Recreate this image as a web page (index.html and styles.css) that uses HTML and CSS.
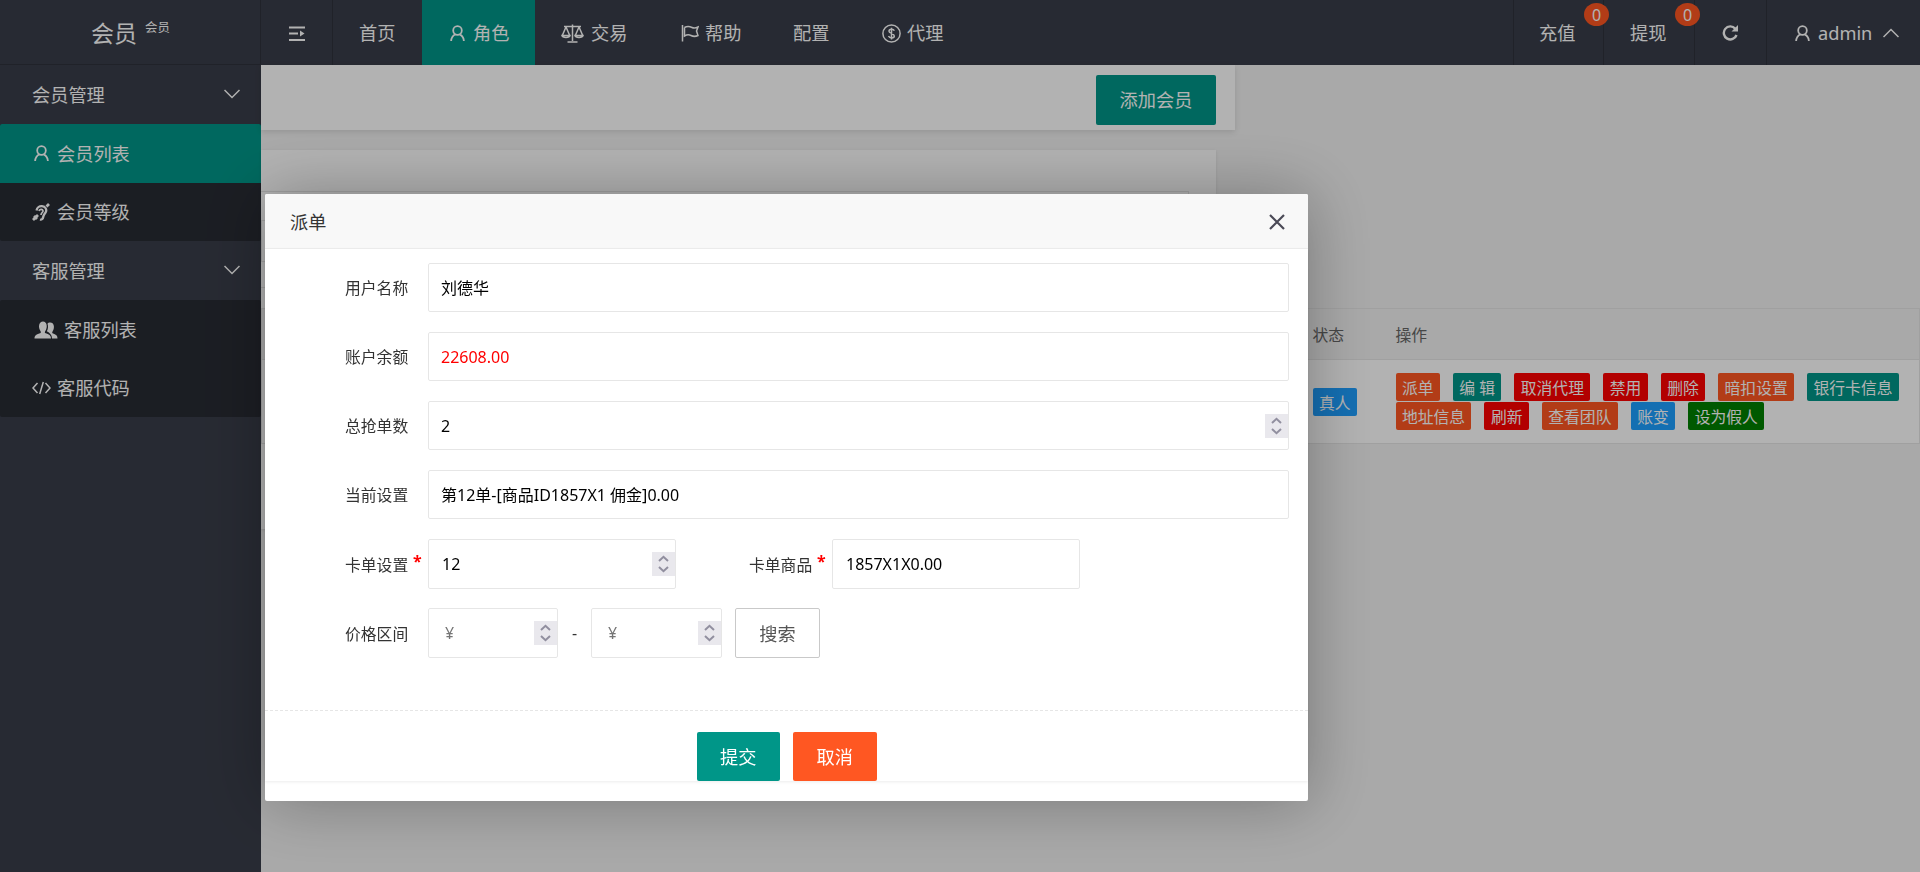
FILE: index.html
```
<!DOCTYPE html>
<html lang="zh-CN">
<head>
<meta charset="UTF-8">
<meta name="viewport" content="width=device-width, initial-scale=1.0">
<title>会员</title>
<link rel="stylesheet" href="styles.css">
</head>
<body>
<svg class="defs" width="0" height="0">
  <symbol id="user" viewBox="0 0 16 18">
    <circle cx="8" cy="5.8" r="4.6"/>
    <path d="M5.8 9.8C3 11.2 1.4 13.6 1.2 17M10.8 10.2C13.2 11.6 14.6 13.8 14.8 17"/>
  </symbol>
  <symbol id="down" viewBox="0 0 16 10"><path d="M.5 1L8 8.5L15.500 1"/></symbol>
  <symbol id="spin" viewBox="0 0 23 24">
    <path d="M7 9L11.500 4.800L16 9M7 15L11.500 19.200L16 15"/>
  </symbol>
</svg>

<div class="layout">
  <aside class="side">
    <div class="logo">会员<sup>会员</sup></div>
    <div class="menu-title">会员管理<svg class="icon arrow"><use href="#down"/></svg></div>
    <div class="submenu">
      <a class="item active"><svg class="icon user"><use href="#user"/></svg>会员列表</a>
      <a class="item">
        <svg class="icon ear" viewBox="0 0 18 18"><path d="M1 17L6 12M2 13L5 16M14.500 3.500L17 1" stroke-width="2.800"/><path d="M4.500 7.500C5 4.500 7.500 3 10 3.200C13.500 3.500 15 6.500 13.800 9C12.800 11 11.500 11.500 11.200 14C11 16 9.500 17 8 16.500" stroke-width="2.300"/><path d="M7 8C7.500 6 10.500 5.500 11 7.800C11.200 9.500 9 9.500 9 12" stroke-width="1.700"/></svg>会员等级
      </a>
    </div>
    <div class="menu-title">客服管理<svg class="icon arrow"><use href="#down"/></svg></div>
    <div class="submenu">
      <a class="item">
        <svg class="icon group" viewBox="0 0 24 18"><path class="solid" d="M14 17.500H23.500C23.500 14.500 22 13.500 18.500 12.300C18 11.500 18.200 11 18.800 10C21 6.500 20 1.500 16.300 1.500C14.800 1.500 13.900 2 13.500 2.800C14.500 5.500 14 8.500 12.800 10.300C15.800 12 18 14 18 17.500Z"/><path class="solid" d="M.5 17.500H17C17 14.500 15.200 13.300 11 12C10.700 11.300 11 10.500 11.500 9.800C13.800 6 13 .5 9 .5C4.800.5 4 6 6.300 9.800C6.800 10.500 7 11.300 6.700 12C2.500 13.200.5 14.500.5 17.500Z"/></svg>客服列表
      </a>
      <a class="item">
        <svg class="icon code" viewBox="0 0 19 14"><path d="M5.500 2L1 7L5.500 12M13.500 2L18 7L13.500 12M11.300 1L7.700 13"/></svg>客服代码
      </a>
    </div>
  </aside>

  <div class="main">
    <header class="header">
      <a class="nav-toggle">
        <svg class="icon toggle" viewBox="0 0 16 16"><path d="M0 1.500H16M0 7.500H9M0 14H16" stroke-width="2.200"/><path class="solid" d="M11 4.500L15.500 7.500L11 10.500Z"/></svg>
      </a>
      <a class="nav home">首页</a>
      <a class="nav role active"><svg class="icon user"><use href="#user"/></svg>角色</a>
      <a class="nav trade">
        <svg class="icon scale" viewBox="0 0 23 19"><path d="M3 2.500H20M11.500 .5V17M6.500 18H16.500M5 3L1.500 11M5 3L8.500 11M18 3L14.500 11M18 3L21.500 11M1 11.500H9C8.500 14 1.500 14 1 11.500ZM14 11.500H22C21.500 14 14.500 14 14 11.500Z"/></svg>交易
      </a>
      <a class="nav help">
        <svg class="icon flag" viewBox="0 0 18 18"><path d="M1.500 1V17.500M3.500 3.500C7 1.500 9 2.500 11 3.500C13 4.500 15 4 17 3L15.500 7L17 11.500C14 13 12 12.500 10 11.500C8 10.500 6 10.500 3.500 12V3.500"/></svg>帮助
      </a>
      <a class="nav config">配置</a>
      <a class="nav agent">
        <svg class="icon coin" viewBox="0 0 19 19"><circle cx="9.500" cy="9.500" r="8.600"/><path d="M12.300 6.800C11.500 4.800 7 4.800 7 7.200C7 9.800 12.300 9 12.300 12C12.300 14.500 7.500 14.500 6.500 12M9.500 3.800V15.500"/></svg>代理
      </a>
      <div class="tools">
        <a class="tool pay">充值<span class="badge">0</span></a>
        <a class="tool cash">提现<span class="badge">0</span></a>
        <a class="tool reload">
          <svg class="icon refresh" viewBox="0 0 16 16"><path d="M13.200 3.600A6.500 6.500 0 1 0 14.500 10" stroke-width="2.400"/><path class="solid" d="M16 0V6.500H9.500Z"/></svg>
        </a>
        <a class="tool admin"><svg class="icon user"><use href="#user"/></svg>admin<svg class="icon arrow up"><use href="#down"/></svg></a>
      </div>
    </header>

    <div class="toolbar"><button class="btn">添加会员</button></div>
    <div class="card">
      <div class="search-box"><div class="search-field"></div></div>
      <table class="table">
        <thead>
          <tr><th class="rest"></th><th class="state">状态</th><th>操作</th></tr>
        </thead>
        <tbody>
          <tr>
            <td class="rest"></td>
            <td class="state"><span class="tag blue">真人</span></td>
            <td>
              <div class="tags">
                <span class="tag orange">派单</span>
                <span class="tag teal">编 辑</span>
                <span class="tag red">取消代理</span>
                <span class="tag red">禁用</span>
                <span class="tag red">删除</span>
                <span class="tag orange">暗扣设置</span>
                <span class="tag teal">银行卡信息</span>
              </div>
              <div class="tags">
                <span class="tag orange">地址信息</span>
                <span class="tag red">刷新</span>
                <span class="tag orange">查看团队</span>
                <span class="tag blue">账变</span>
                <span class="tag green">设为假人</span>
              </div>
            </td>
          </tr>
        </tbody>
      </table>
    </div>
  </div>
</div>

<div class="shade"></div>

<div class="modal">
  <div class="modal-title">派单
    <svg class="close" viewBox="0 0 16 16"><path d="M1 1L15 15M15 1L1 15"/></svg>
  </div>
  <form class="form">
    <div class="row">
      <label>用户名称</label>
      <div class="field full">刘德华</div>
    </div>
    <div class="row">
      <label>账户余额</label>
      <div class="field full money">22608.00</div>
    </div>
    <div class="row">
      <label>总抢单数</label>
      <div class="field full">2<svg class="spin"><use href="#spin"/></svg></div>
    </div>
    <div class="row">
      <label>当前设置</label>
      <div class="field full">第12单-[商品ID1857X1 佣金]0.00</div>
    </div>
    <div class="row tall">
      <label class="required">卡单设置</label>
      <div class="field half">12<svg class="spin"><use href="#spin"/></svg></div>
      <label class="required second">卡单商品</label>
      <div class="field half">1857X1X0.00</div>
    </div>
    <div class="row tall">
      <label>价格区间</label>
      <div class="field price">¥<svg class="spin"><use href="#spin"/></svg></div>
      <span class="dash">-</span>
      <div class="field price last">¥<svg class="spin"><use href="#spin"/></svg></div>
      <button type="button" class="btn plain">搜索</button>
    </div>
    <div class="line"></div>
    <div class="actions">
      <button type="button" class="btn">提交</button>
      <button type="button" class="btn danger">取消</button>
    </div>
  </form>
</div>
</body>
</html>
```

FILE: styles.css
```
* {
  box-sizing: border-box;
}

body {
  margin: 0;
  height: 872px;
  overflow: hidden;
  background: #f2f2f2;
  color: #333;
  font-family: "Noto Sans", "Noto Sans CJK SC", sans-serif;
  font-size: 18.2px;
  line-height: 24px;
}

button {
  font-family: inherit;
}

.defs {
  position: absolute;
}

.icon {
  flex: none;
  fill: none;
  stroke: currentColor;
  stroke-width: 1.5;
}

.icon .solid {
  fill: currentColor;
  stroke: none;
}

.icon.user {
  width: 15px;
  height: 17px;
  stroke-width: 1.9;
}

.icon.arrow {
  width: 16px;
  height: 10px;
}

.layout {
  display: flex;
  height: 872px;
}

/* side menu */
.side {
  flex: none;
  width: 261px;
  background: #393d49;
  color: #fff;
}

.logo {
  height: 65px;
  padding: 15px 0 0 91px;
  border-right: 1px solid #2f323c;
  border-bottom: 1px solid #2f323c;
  font-size: 23px;
  line-height: 36px;
  display: flex;
}

.logo sup {
  margin: -5px 0 0 8px;
  font-size: 12.4px;
}

.menu-title {
  display: flex;
  align-items: center;
  justify-content: space-between;
  height: 59px;
  padding: 1px 21px 0 32px;
}

.menu-title .arrow {
  margin-top: -3px;
}

.submenu {
  height: 117px;
  border-radius: 2px;
  background: #282b33;
  overflow: hidden;
}

.item {
  display: flex;
  align-items: center;
  height: 58.5px;
  padding: 1px 0 0 32px;
}

.item .user {
  margin: 0 8px 0 2px;
}

.item.active,
.nav.active {
  background: #009688;
}

.ear {
  width: 18px;
  height: 18px;
  margin-right: 7px;
}

.group {
  width: 24px;
  height: 18px;
  margin: 0 6px 0 2px;
}

.code {
  width: 19px;
  height: 14px;
  margin-right: 6px;
}

/* top bar */
.main {
  width: 1659px;
}

.header {
  display: flex;
  height: 65px;
  background: #393d49;
  color: #fff;
}

.nav-toggle {
  display: flex;
  align-items: center;
  justify-content: center;
  width: 72px;
  padding-top: 2px;
  border-right: 1px solid #2f323c;
}

.toggle {
  width: 16px;
  height: 16px;
}

.nav {
  display: flex;
  align-items: center;
  padding: 1px 0 0 26px;
}

.home { width: 89px; }
.role { width: 113px; padding-left: 28px; }
.trade { width: 120px; }
.help { width: 111px; }
.config { width: 89px; padding-left: 27px; }
.agent { padding-left: 27px; }

.role .user { margin-right: 8px; }

.scale {
  width: 23px;
  height: 19px;
  margin-right: 7px;
}

.flag {
  width: 18px;
  height: 18px;
  margin-right: 6px;
}

.coin {
  width: 19px;
  height: 19px;
  margin-right: 6px;
}

.tools {
  display: flex;
  margin-left: auto;
}

.tool {
  position: relative;
  display: flex;
  align-items: center;
  padding: 1px 0 0 25px;
  border-left: 1px solid #2f323c;
}

.pay { width: 90px; }
.cash { width: 91px; padding-left: 26px; }
.reload { width: 72px; padding-left: 27px; }
.admin { width: 154px; padding-left: 28px; }

.refresh {
  width: 16px;
  height: 16px;
}

.admin .user {
  margin-right: 8px;
}

.arrow.up {
  margin-left: 11px;
  transform: rotate(180deg);
}

.badge {
  position: absolute;
  top: 3px;
  left: 70px;
  z-index: 1;
  width: 25px;
  height: 23px;
  border-radius: 50%;
  background: #ff5722;
  font-size: 16px;
  line-height: 24px;
  text-align: center;
}

.cash .badge {
  left: 71px;
}

/* list page */
.toolbar {
  width: 974px;
  height: 65px;
  padding: 10px 19px;
  background: #fff;
  box-shadow: 0 2px 6px rgba(0, 0, 0, .12);
  text-align: right;
}

.toolbar .btn {
  width: 120px;
}

.card {
  width: 955px;
  height: 379px;
  margin-top: 20px;
  padding-top: 41px;
  background: #fff;
  box-shadow: 0 1px 3px rgba(0, 0, 0, .1);
}

.search-box {
  width: 928px;
  height: 97px;
  margin-bottom: 20px;
  padding-top: 28px;
  border: 1px solid #e6e6e6;
  border-left: none;
}

.search-field {
  width: 200px;
  height: 42px;
  border: 1px solid #e6e6e6;
}

.table {
  width: 1659px;
  border-collapse: collapse;
  table-layout: fixed;
  color: #666;
  font-size: 15.8px;
  line-height: 24px;
  background: #fff;
}

.table tr {
  border: 1px solid #e6e6e6;
}

.table thead {
  background: #f2f2f2;
}

.table th,
.table td {
  padding: 0;
  text-align: left;
  font-weight: normal;
}

.table th {
  height: 51px;
  padding-top: 2px;
}

.table td {
  height: 84px;
}

.table .rest {
  width: 1051px;
}

.table .state {
  width: 83px;
}

.tags {
  display: flex;
  gap: 13px;
  margin-bottom: 1px;
}

.tag {
  display: inline-block;
  height: 28px;
  padding: 0 6.4px;
  border-radius: 2px;
  color: #fff;
  line-height: 30px;
  white-space: nowrap;
}

.orange { background: #ff5722; }
.teal { background: #009688; }
.red { background: #f00; }
.blue { background: #1e9fff; }
.green { background: #008000; }

.btn {
  height: 50px;
  padding: 0;
  border: none;
  border-radius: 2px;
  background: #009688;
  color: #fff;
  font-size: 18.2px;
  line-height: 51px;
}

.btn.danger {
  background: #ff5722;
}

.btn.plain {
  width: 85px;
  margin-left: 13px;
  border: 1px solid #c9c9c9;
  background: #fff;
  color: #555;
}

/* dialog */
.shade {
  position: fixed;
  inset: 0;
  z-index: 2;
  background: rgba(0, 0, 0, .3);
}

.modal {
  position: fixed;
  top: 194px;
  left: 265px;
  z-index: 3;
  width: 1043px;
  height: 607px;
  border-radius: 2px;
  background: #fff;
  box-shadow: 1px 1px 65px rgba(0, 0, 0, .3);
}

.modal-title {
  display: flex;
  align-items: center;
  justify-content: space-between;
  height: 55px;
  padding: 1px 23px 0 25px;
  border-bottom: 1px solid #eee;
  border-radius: 2px 2px 0 0;
  background: #f8f8f8;
}

.close {
  width: 16px;
  height: 16px;
  stroke: #4a4956;
  stroke-width: 2.2;
}

.form {
  height: 532px;
  padding-top: 14px;
  box-shadow: 0 1px 3px rgba(0, 0, 0, .08);
}

.row {
  display: flex;
  align-items: center;
  height: 49px;
  margin-bottom: 20px;
  font-size: 16px;
}

.row.tall {
  height: 50px;
  margin-bottom: 19px;
}

.row label {
  position: relative;
  width: 83px;
  margin-left: 80px;
  padding-top: 1px;
  font-size: 15.8px;
}

.row .second {
  margin-left: 73px;
}

.required::after {
  content: "*";
  position: absolute;
  top: -3px;
  left: 68px;
  color: #f00;
  font-size: 16px;
  font-weight: bold;
}

.field {
  position: relative;
  display: flex;
  align-items: center;
  height: 100%;
  padding-left: 12px;
  border: 1px solid #e6e6e6;
  border-radius: 2px;
  color: #000;
}

.full { width: 861px; }

.half {
  width: 248px;
  padding-left: 13px;
}

.price {
  width: 130px;
  padding-left: 16px;
  color: #757575;
}

.price.last {
  width: 131px;
}

.money {
  color: #f00;
}

.spin {
  width: 23px;
  height: 24px;
  margin-left: auto;
  background: #e9e8ed;
  fill: none;
  stroke: #918f9f;
  stroke-width: 2;
}

.dash {
  width: 33px;
  text-align: center;
}

.line {
  margin-top: 52px;
  border-top: 1px dashed #e6e6e6;
}

.actions {
  display: flex;
  justify-content: center;
  gap: 13px;
  padding-top: 21px;
}

.actions .btn {
  width: 83.500px;
  height: 49px;
}
```
